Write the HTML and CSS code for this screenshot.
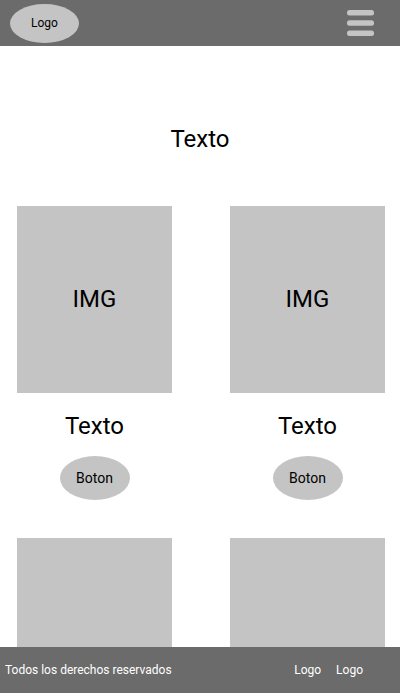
FILE: index.html
```html
<!DOCTYPE html>
<html lang="es">
<head>
<meta charset="utf-8">
<meta name="viewport" content="width=device-width, initial-scale=1">
<title>Texto</title>
<link rel="stylesheet" href="styles.css">
</head>
<body>
<header class="bar header">
  <a class="logo" href="#">Logo</a>
  <button class="menu" type="button" aria-label="Menu">
    <svg width="27" height="26" viewBox="0 0 27 26" aria-hidden="true">
      <rect width="27" height="5.4" rx="2.5"/>
      <rect y="10.3" width="27" height="5.4" rx="2.5"/>
      <rect y="20.6" width="27" height="5.4" rx="2.5"/>
    </svg>
  </button>
</header>
<main class="content">
  <h1 class="title">Texto</h1>
  <div class="grid">
    <article class="card">
      <div class="image">IMG</div>
      <h2 class="name">Texto</h2>
      <button class="action" type="button">Boton</button>
    </article>
    <article class="card">
      <div class="image">IMG</div>
      <h2 class="name">Texto</h2>
      <button class="action" type="button">Boton</button>
    </article>
    <article class="card">
      <div class="image"></div>
    </article>
    <article class="card">
      <div class="image"></div>
    </article>
  </div>
</main>
<footer class="bar footer">
  <p class="rights">Todos los derechos reservados</p>
  <nav class="links">
    <a href="#">Logo</a>
    <a href="#">Logo</a>
  </nav>
</footer>
</body>
</html>
```
FILE: styles.css
```css
* {
  box-sizing: border-box;
}

body {
  display: flex;
  flex-direction: column;
  height: 100vh;
  margin: 0;
  background: #fff;
  color: #000;
  font-family: Roboto, sans-serif;
}

h1, h2, p {
  margin: 0;
  font-weight: 400;
}

a {
  color: inherit;
  text-decoration: none;
}

button {
  border: 0;
  font-family: inherit;
  color: inherit;
  cursor: pointer;
}

.bar {
  display: flex;
  flex: none;
  align-items: center;
  justify-content: space-between;
  height: 46px;
  background: #6b6b6b;
  font-size: 12px;
}

.header {
  padding: 0 26px 0 10px;
}

.logo {
  display: grid;
  place-items: center;
  width: 69px;
  height: 39px;
  border-radius: 50%;
  background: #c4c4c4;
}

.menu {
  display: flex;
  padding: 0;
  background: none;
  fill: #c4c4c4;
}

.content {
  flex: 1;
  min-height: 0;
  overflow: hidden;
  padding-top: 79px;
}

.title, .name, .image {
  font-size: 24px;
  line-height: 28px;
}

.title {
  margin-bottom: 53px;
  text-align: center;
}

.grid {
  display: grid;
  grid-template-columns: 155px 155px;
  justify-content: space-between;
  row-gap: 38px;
  padding: 0 15px 0 17px;
}

.card {
  display: flex;
  flex-direction: column;
  align-items: center;
}

.image {
  display: grid;
  place-items: center;
  width: 100%;
  height: 187px;
  padding-bottom: 2px;
  background: #c4c4c4;
}

.name {
  margin: 19px 0 16px;
}

.action {
  width: 70px;
  height: 44px;
  padding: 0;
  border-radius: 50%;
  background: #c4c4c4;
  font-size: 14px;
}

.footer {
  padding: 0 37px 0 5px;
  color: #fff;
}

.links {
  display: flex;
  gap: 15px;
}
```
